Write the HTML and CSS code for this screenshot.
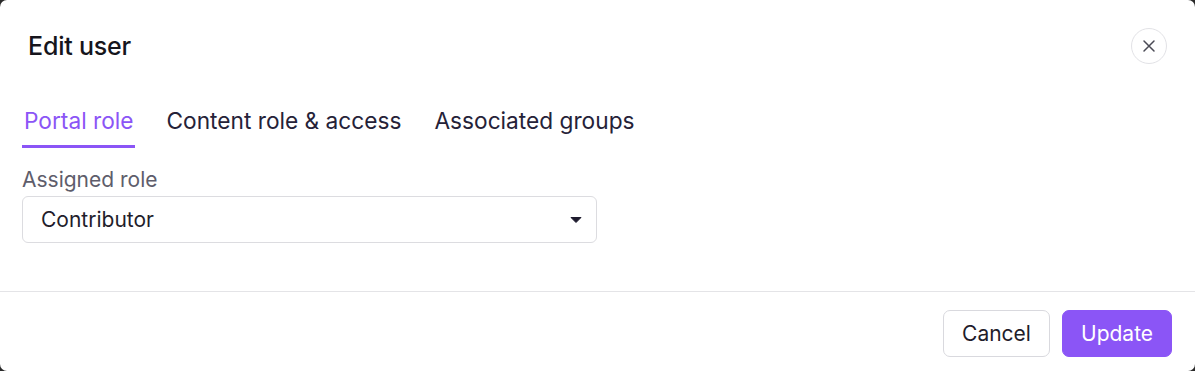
FILE: index.html
```html
<!DOCTYPE html>
<html>
<head>
<meta charset="utf-8">
<link rel="stylesheet" href="styles.css">
</head>
<body>
<div class="modal">
  <div class="header">
    <h1 class="title">Edit user</h1>
    <button class="close" aria-label="Close">
      <svg width="14" height="14" viewBox="0 0 14 14"><path d="M2 2L12 12M12 2L2 12" stroke="#4a4a55" stroke-width="1.5" stroke-linecap="round"/></svg>
    </button>
  </div>
  <div class="tabs">
    <div class="tab active">Portal role</div>
    <div class="tab">Content role &amp; access</div>
    <div class="tab">Associated groups</div>
  </div>
  <div class="body">
    <div class="label">Assigned role</div>
    <div class="select">
      <span>Contributor</span>
      <svg width="12" height="8" viewBox="0 0 12 8"><path d="M1 1.5H11L6 6.5Z" fill="#1e1b2e" stroke="#1e1b2e" stroke-width="1" stroke-linejoin="round"/></svg>
    </div>
  </div>
  <div class="footer">
    <button class="btn cancel">Cancel</button>
    <button class="btn primary">Update</button>
  </div>
</div>
</body>
</html>
```
FILE: styles.css
```css
html, body { margin: 0; padding: 0; }
body {
  background: #2a2a2a;
  font-family: Inter, "Noto Sans", sans-serif;
  width: 1195px;
  height: 371px;
  overflow: hidden;
}
.modal {
  background: #fff;
  width: 1195px;
  height: 371px;
  border-radius: 7px;
  box-sizing: border-box;
  display: flex;
  flex-direction: column;
}
.header {
  display: flex;
  align-items: center;
  justify-content: space-between;
  padding: 28px 29px 0 28px;
  height: 36px;
}
.title {
  margin: 0;
  font-size: 25px;
  line-height: 30px;
  font-weight: 500;
  color: #16151c;
  letter-spacing: -0.2px;
}
.close {
  width: 36px;
  height: 36px;
  border-radius: 50%;
  border: 1px solid #e2e2e6;
  background: #fff;
  display: flex;
  align-items: center;
  justify-content: center;
  padding: 0;
  margin-right: -1px;
}
.tabs {
  display: flex;
  gap: 30px;
  padding: 0 22px;
  margin-top: 43px;
}
.tab {
  font-size: 22.7px;
  color: #252238;
  padding: 0 1px 10px 2px;
  border-bottom: 3px solid transparent;
  line-height: 28px;
}
.tab.active {
  color: #8b55f6;
  border-bottom-color: #8b55f6;
}
.body {
  padding: 19px 22px 0;
  flex: 1;
}
.label {
  font-size: 21px;
  color: #5e5d6b;
  line-height: 25px;
  margin-bottom: 4px;
}
.select {
  width: 575px;
  height: 47px;
  box-sizing: border-box;
  border: 1px solid #dcdce0;
  border-radius: 6px;
  display: flex;
  align-items: center;
  justify-content: space-between;
  padding: 0 14px 0 18px;
  font-size: 21px;
  color: #1f1d2b;
}
.footer {
  border-top: 1px solid #e4e4e7;
  display: flex;
  justify-content: flex-end;
  gap: 12px;
  padding: 18px 23px 14px;
}
.btn {
  height: 47px;
  border-radius: 7px;
  font-family: Inter, "Noto Sans", sans-serif;
  font-size: 21px;
  padding: 0 18px;
}
.cancel {
  background: #fff;
  border: 1px solid #d9d9de;
  color: #1f1d2b;
  width: 107px;
}
.primary {
  background: #8b55f6;
  border: 1px solid #8b55f6;
  color: #fff;
  width: 110px;
}
```
